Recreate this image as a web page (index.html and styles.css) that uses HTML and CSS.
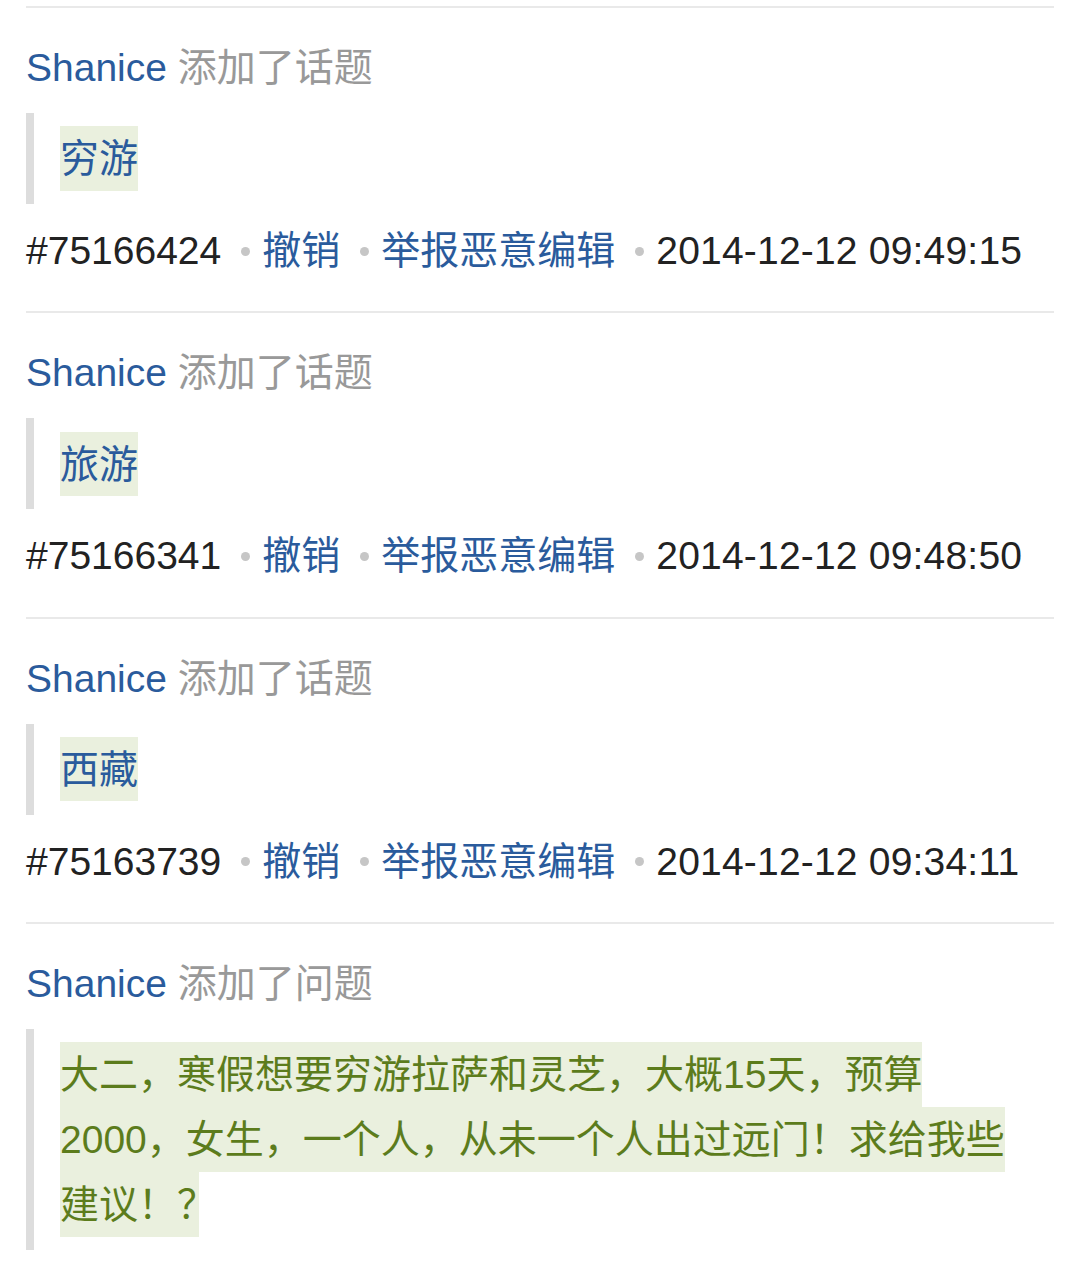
FILE: index.html
```html
<!DOCTYPE html>
<html lang="zh-CN">
<head>
<meta charset="utf-8">
<title>编辑记录</title>
<link rel="stylesheet" href="styles.css">
</head>
<body>
<div class="log">
  <div class="entry">
    <div class="head"><a class="user">Shanice</a> <span class="action">添加了话题</span></div>
    <blockquote class="quote"><span class="tag">穷游</span></blockquote>
    <div class="meta"><span class="num">#75166424</span><span class="dot"></span><a class="link">撤销</a><span class="dot"></span><a class="link">举报恶意编辑</a><span class="dot"></span><span class="time">2014-12-12 09:49:15</span></div>
  </div>
  <div class="entry">
    <div class="head"><a class="user">Shanice</a> <span class="action">添加了话题</span></div>
    <blockquote class="quote"><span class="tag">旅游</span></blockquote>
    <div class="meta"><span class="num">#75166341</span><span class="dot"></span><a class="link">撤销</a><span class="dot"></span><a class="link">举报恶意编辑</a><span class="dot"></span><span class="time">2014-12-12 09:48:50</span></div>
  </div>
  <div class="entry">
    <div class="head"><a class="user">Shanice</a> <span class="action">添加了话题</span></div>
    <blockquote class="quote"><span class="tag">西藏</span></blockquote>
    <div class="meta"><span class="num">#75163739</span><span class="dot"></span><a class="link">撤销</a><span class="dot"></span><a class="link">举报恶意编辑</a><span class="dot"></span><span class="time">2014-12-12 09:34:11</span></div>
  </div>
  <div class="entry">
    <div class="head"><a class="user">Shanice</a> <span class="action">添加了问题</span></div>
    <blockquote class="quote"><span class="tag added">大二，寒假想要穷游拉萨和灵芝，大概15天，预算2000，女生，一个人，从未一个人出过远门！求给我些建议！<span class="trim">？</span></span></blockquote>
  </div>
</div>
</body>
</html>
```

FILE: styles.css
```css
html, body {
  margin: 0;
  padding: 0;
  background: #ffffff;
}

body {
  font-family: "Liberation Sans", "Noto Sans CJK SC", sans-serif;
  font-size: 39px;
  color: #222222;
}

.log {
  padding: 6px 26px 0 26px;
}

.entry {
  border-top: 2px solid #e9e9e9;
  padding: 32px 0 32.4px 0;
}

.head {
  line-height: 56px;
  white-space: nowrap;
}

.user {
  color: #2a5b9c;
}

.action {
  color: #999999;
}

.quote {
  margin: 17px 26px 0 0;
  padding: 13px 0 13px 26px;
  border-left: 8px solid #dddddd;
  line-height: 65px;
}

.tag {
  background: #eaf0de;
  color: #2a5b9c;
  padding: 10.7px 0;
}

.tag.added {
  color: #5c7c1c;
}

.trim {
  letter-spacing: -17px;
}

.meta {
  margin-top: 19px;
  display: flex;
  align-items: center;
  line-height: 56px;
  white-space: nowrap;
}

.link {
  color: #2a5b9c;
}

.dot {
  width: 9px;
  height: 9px;
  border-radius: 50%;
  background: #c6c6c6;
  margin: 0 12px 0 20px;
  flex: none;
}

.num, .time {
  color: #222222;
}

.time {
  letter-spacing: 0.2px;
}
```
